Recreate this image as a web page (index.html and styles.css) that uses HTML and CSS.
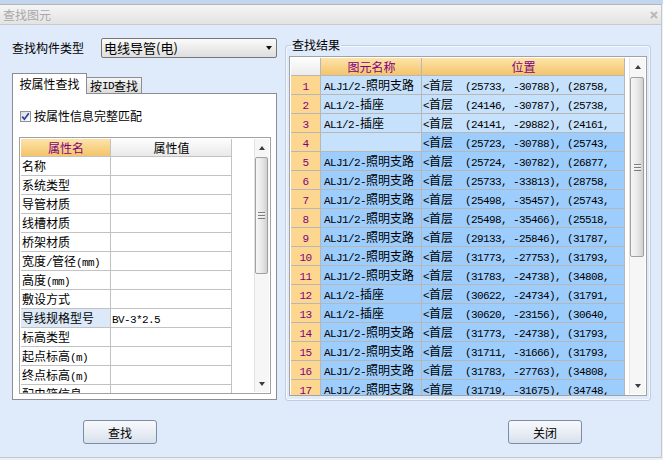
FILE: index.html
```html
<!DOCTYPE html>
<html lang="zh-CN">
<head>
<meta charset="utf-8">
<title>查找图元</title>
<link rel="stylesheet" href="styles.css">
</head>
<body>
<div class="topstrip"></div>
<div class="window">
  <div class="titlebar">
    <span class="title">查找图元</span>
    <svg class="close" width="8" height="8" viewBox="0 0 8 8"><path d="M1 1 L7 7 M7 1 L1 7" stroke="#b9b9b9" stroke-width="2"/></svg>
  </div>
  <div class="content">
    <div class="left">
      <div class="typerow">
        <span class="lbl">查找构件类型</span>
        <div class="select"><span>电线导管(电)</span><i class="arrow"></i></div>
      </div>
      <div class="tabs">
        <div class="tab active">按属性查找</div>
        <div class="tab inactive">按<span class="m">ID</span>查找</div>
      </div>
      <div class="panel">
        <div class="check">
          <span class="box"><svg width="9" height="9" viewBox="0 0 9 9"><path d="M1.2 4.6 L3.4 7.2 L7.8 1.2" fill="none" stroke="#2c3f9c" stroke-width="1.7"/></svg></span>
          <span>按属性信息完整匹配</span>
        </div>
        <div class="ptable">
          <div class="pgrid">
            <div class="cell ph1">属性名</div><div class="cell ph2">属性值</div>
            <div class="cell">名称</div><div class="cell"></div>
            <div class="cell">系统类型</div><div class="cell"></div>
            <div class="cell">导管材质</div><div class="cell"></div>
            <div class="cell">线槽材质</div><div class="cell"></div>
            <div class="cell">桥架材质</div><div class="cell"></div>
            <div class="cell">宽度<span class="m">/</span>管径<span class="m">(mm)</span></div><div class="cell"></div>
            <div class="cell">高度<span class="m">(mm)</span></div><div class="cell"></div>
            <div class="cell">敷设方式</div><div class="cell"></div>
            <div class="cell sel">导线规格型号</div><div class="cell"><span class="m">BV-3*2.5</span></div>
            <div class="cell">标高类型</div><div class="cell"></div>
            <div class="cell">起点标高<span class="m">(m)</span></div><div class="cell"></div>
            <div class="cell">终点标高<span class="m">(m)</span></div><div class="cell"></div>
            <div class="cell">配电箱信息</div><div class="cell"></div>
          </div>
          <div class="vscroll sm">
            <div class="sb-btn"><i class="up"></i></div>
            <div class="sb-track"><div class="thumb"><i class="grip"></i></div></div>
            <div class="sb-btn"><i class="down"></i></div>
          </div>
        </div>
      </div>
      <div class="btnrow"><button class="btn">查找</button></div>
    </div>

    <div class="right">
      <fieldset class="group">
        <legend>查找结果</legend>
        <div class="rtable">
          <div class="rgrid">
            <div class="cell hc"></div><div class="cell ho">图元名称</div><div class="cell ho">位置</div>

            <div class="cell n"><span class="m">1</span></div><div class="cell nm l"><span class="m">ALJ1/2-</span>照明支路</div><div class="cell ps l"><span class="m">&lt;</span>首层<span class="m">  (25733, -30788), (28758,</span></div>
            <div class="cell n"><span class="m">2</span></div><div class="cell nm l"><span class="m">AL1/2-</span>插座</div><div class="cell ps l"><span class="m">&lt;</span>首层<span class="m">  (24146, -30787), (25738,</span></div>
            <div class="cell n"><span class="m">3</span></div><div class="cell nm l"><span class="m">AL1/2-</span>插座</div><div class="cell ps l"><span class="m">&lt;</span>首层<span class="m">  (24141, -29882), (24161,</span></div>
            <div class="cell n"><span class="m">4</span></div><div class="cell nm l"></div><div class="cell ps d"><span class="m">&lt;</span>首层<span class="m">  (25723, -30788), (25743,</span></div>
            <div class="cell n"><span class="m">5</span></div><div class="cell nm d"><span class="m">ALJ1/2-</span>照明支路</div><div class="cell ps d"><span class="m">&lt;</span>首层<span class="m">  (25724, -30782), (26877,</span></div>
            <div class="cell n"><span class="m">6</span></div><div class="cell nm d"><span class="m">ALJ1/2-</span>照明支路</div><div class="cell ps d"><span class="m">&lt;</span>首层<span class="m">  (25733, -33813), (28758,</span></div>
            <div class="cell n"><span class="m">7</span></div><div class="cell nm d"><span class="m">ALJ1/2-</span>照明支路</div><div class="cell ps d"><span class="m">&lt;</span>首层<span class="m">  (25498, -35457), (25743,</span></div>
            <div class="cell n"><span class="m">8</span></div><div class="cell nm d"><span class="m">ALJ1/2-</span>照明支路</div><div class="cell ps d"><span class="m">&lt;</span>首层<span class="m">  (25498, -35466), (25518,</span></div>
            <div class="cell n"><span class="m">9</span></div><div class="cell nm d"><span class="m">ALJ1/2-</span>照明支路</div><div class="cell ps d"><span class="m">&lt;</span>首层<span class="m">  (29133, -25846), (31787,</span></div>
            <div class="cell n"><span class="m">10</span></div><div class="cell nm d"><span class="m">ALJ1/2-</span>照明支路</div><div class="cell ps d"><span class="m">&lt;</span>首层<span class="m">  (31773, -27753), (31793,</span></div>
            <div class="cell n"><span class="m">11</span></div><div class="cell nm d"><span class="m">ALJ1/2-</span>照明支路</div><div class="cell ps d"><span class="m">&lt;</span>首层<span class="m">  (31783, -24738), (34808,</span></div>
            <div class="cell n"><span class="m">12</span></div><div class="cell nm d"><span class="m">AL1/2-</span>插座</div><div class="cell ps d"><span class="m">&lt;</span>首层<span class="m">  (30622, -24734), (31791,</span></div>
            <div class="cell n"><span class="m">13</span></div><div class="cell nm d"><span class="m">AL1/2-</span>插座</div><div class="cell ps d"><span class="m">&lt;</span>首层<span class="m">  (30620, -23156), (30640,</span></div>
            <div class="cell n"><span class="m">14</span></div><div class="cell nm d"><span class="m">ALJ1/2-</span>照明支路</div><div class="cell ps d"><span class="m">&lt;</span>首层<span class="m">  (31773, -24738), (31793,</span></div>
            <div class="cell n"><span class="m">15</span></div><div class="cell nm d"><span class="m">ALJ1/2-</span>照明支路</div><div class="cell ps d"><span class="m">&lt;</span>首层<span class="m">  (31711, -31666), (31793,</span></div>
            <div class="cell n"><span class="m">16</span></div><div class="cell nm d"><span class="m">ALJ1/2-</span>照明支路</div><div class="cell ps d"><span class="m">&lt;</span>首层<span class="m">  (31783, -27763), (34808,</span></div>
            <div class="cell n"><span class="m">17</span></div><div class="cell nm d"><span class="m">ALJ1/2-</span>照明支路</div><div class="cell ps d"><span class="m">&lt;</span>首层<span class="m">  (31719, -31675), (34748,</span></div>
          </div>
          <div class="vscroll lg">
            <div class="sb-btn"><i class="up"></i></div>
            <div class="sb-track"><div class="thumb"><i class="grip"></i></div></div>
            <div class="sb-btn"><i class="down"></i></div>
          </div>
        </div>
      </fieldset>
      <div class="btnrow rb"><button class="btn">关闭</button></div>
    </div>
  </div>
</div>
</body>
</html>
```

FILE: styles.css
```css
* { box-sizing: border-box; }
html, body { margin: 0; padding: 0; }
body {
  width: 663px;
  height: 460px;
  overflow: hidden;
  background: #eceff4;
  font-family: "Noto Sans CJK SC", sans-serif;
  font-size: 12px;
  color: #000;
}
.m {
  font-family: "Liberation Mono", "DejaVu Sans Mono", monospace;
  font-size: 11px;
  letter-spacing: -0.6px;
  white-space: pre;
}
.topstrip { height: 4px; background: #c4d6ee; }
.window {
  width: 662px;
  height: 454px;
  border-top: 1px solid #b2b5ba;
  border-right: 1px solid #c3c8cf;
  border-bottom: 1px solid #c3c8cf;
  display: flex;
  flex-direction: column;
}
.titlebar {
  height: 20px;
  border-bottom: 1px solid #cacaca;
  background: linear-gradient(#f5f5f5, #e3e3e3);
  display: flex;
  align-items: center;
  justify-content: space-between;
  padding: 0 3px 0 3px;
}
.title { color: #a8a8a8; line-height: 18px; }
.content {
  flex: 1;
  background: #dfeafa;
  display: flex;
  gap: 8px;
  padding: 13px 0 0 12px;
}

/* left column */
.left { width: 265px; display: flex; flex-direction: column; }
.typerow { display: flex; align-items: center; height: 20px; }
.lbl { width: 89px; line-height: 18px; }
.select {
  width: 176px;
  height: 20px;
  border: 1px solid #777;
  border-radius: 2px;
  background: linear-gradient(#fbfbfb, #ececec 50%, #dedede);
  display: flex;
  align-items: center;
  justify-content: space-between;
  padding: 0 4px 0 2px;
  font-size: 13px;
  line-height: 18px;
}
.arrow {
  width: 0; height: 0;
  border-left: 3.5px solid transparent;
  border-right: 3.5px solid transparent;
  border-top: 4px solid #111;
}
.tabs { display: flex; align-items: flex-end; height: 20px; margin-top: 15px; }
.tab {
  border: 1px solid #8b8e94;
  border-bottom: none;
  display: flex;
  align-items: center;
  justify-content: center;
  line-height: 14px;
}
.tab.active {
  width: 75px;
  height: 21px;
  margin-bottom: -1px;
  background: #fff;
  position: relative;
  z-index: 1;
  padding-bottom: 1px;
}
.tab.inactive {
  width: 55px;
  height: 16px;
  border-left: none;
  background: linear-gradient(#f6f6f6, #dcdcdc);
  padding-top: 1px;
}
.panel {
  height: 307px;
  border: 1px solid #8b8e94;
  background: #fff;
}
.check {
  display: flex;
  align-items: center;
  height: 12px;
  margin: 16px 0 0 7px;
  line-height: 12px;
}
.box {
  width: 11px;
  height: 11px;
  border: 1px solid #8d929b;
  background: linear-gradient(135deg, #d9dbe0, #fdfdfd);
  display: flex;
  align-items: center;
  justify-content: center;
  margin-right: 3px;
}
.ptable {
  margin: 15px 0 0 6px;
  width: 252px;
  height: 257px;
  border: 1px solid #a2a2a2;
  padding: 1px;
  display: flex;
  justify-content: space-between;
  overflow: hidden;
  background: #fff;
}
.pgrid {
  display: grid;
  grid-template-columns: 90px 121px;
  grid-template-rows: 18px;
  grid-auto-rows: 19px;
  align-self: flex-start;
}
.cell {
  border-right: 1px solid #c2c2c2;
  border-bottom: 1px solid #c2c2c2;
  padding-left: 1px;
  line-height: 18px;
  white-space: nowrap;
  overflow: hidden;
}
.ph1 {
  background: linear-gradient(#fde3a9, #f4c46b);
  color: #800080;
  text-align: center;
  line-height: 17px;
}
.ph2 {
  background: linear-gradient(#fdfdfd, #e9e9e9);
  text-align: center;
  line-height: 17px;
}
.sel { background: #dce9f8; }
.btnrow { margin-top: 20px; padding-left: 71px; }
.btnrow.rb { margin-top: 19px; padding-left: 223px; }
.btn {
  width: 74px;
  height: 24px;
  border: 1px solid #7b8da6;
  border-radius: 3px;
  background: linear-gradient(#f7f9fc, #e9eef5 50%, #d8e0ec);
  font-family: "Noto Sans CJK SC", sans-serif;
  font-size: 12px;
  color: #000;
  padding: 0;
}

/* scrollbars */
.vscroll {
  display: flex;
  flex-direction: column;
  background: #f6f6f6;
  border-left: 1px solid #e2e2e2;
}
.vscroll.sm { width: 15px; }
.vscroll.lg { width: 16px; }
.sb-btn {
  height: 17px;
  display: flex;
  align-items: center;
  justify-content: center;
  flex: none;
}
.up, .down {
  width: 0; height: 0;
  border-left: 3.5px solid transparent;
  border-right: 3.5px solid transparent;
}
.up { border-bottom: 4px solid #3c3c3c; }
.down { border-top: 4px solid #3c3c3c; }
.sb-track { flex: 1; }
.thumb {
  border: 1px solid #a0a0a0;
  border-radius: 2px;
  background: linear-gradient(to right, #f6f6f6, #e8e8e8 55%, #d0d0d0);
  display: flex;
  align-items: center;
  justify-content: center;
  margin-right: 1px;
}
.vscroll.sm .thumb { height: 117px; margin-top: 1px; }
.vscroll.lg .thumb { height: 180px; margin-top: 2px; }
.grip {
  width: 7px;
  height: 7px;
  background: repeating-linear-gradient(#7e7e7e 0 1px, #f4f4f4 1px 2px, transparent 2px 3px);
}

/* right column */
.right { width: 366px; display: flex; flex-direction: column; }
.group {
  margin: 0;
  padding: 4px 3px 4px 3px;
  border: 1px solid #bfcde0;
  border-radius: 3px;
  box-shadow: inset 0 0 0 1px #f6f9fe;
  min-width: 0;
}
.group legend {
  padding: 0 1px;
  margin-left: 2px;
  line-height: 14px;
  height: 14px;
}
.rtable {
  width: 358px;
  height: 340px;
  border: 1px solid #a2a2a2;
  padding: 1px;
  background: #fff;
  display: flex;
  justify-content: space-between;
  overflow: hidden;
}
.rgrid {
  display: grid;
  grid-template-columns: 30px 101px 203px;
  grid-template-rows: 18px;
  grid-auto-rows: 19px;
  align-self: flex-start;
}
.rgrid .cell { border-color: #b7b7b7; }
.hc { background: linear-gradient(#fdfdfd, #ececec); }
.ho {
  background: linear-gradient(#fde4ab, #f4c46b);
  color: #800080;
  text-align: center;
  line-height: 17px;
}
.n { background: #fdd68f; color: #800080; text-align: center; padding-left: 0; }
.nm { padding-left: 3px; }
.ps { padding-left: 1px; }
.l { background: #c5e1fc; }
.d { background: #9dcdfd; }
```
